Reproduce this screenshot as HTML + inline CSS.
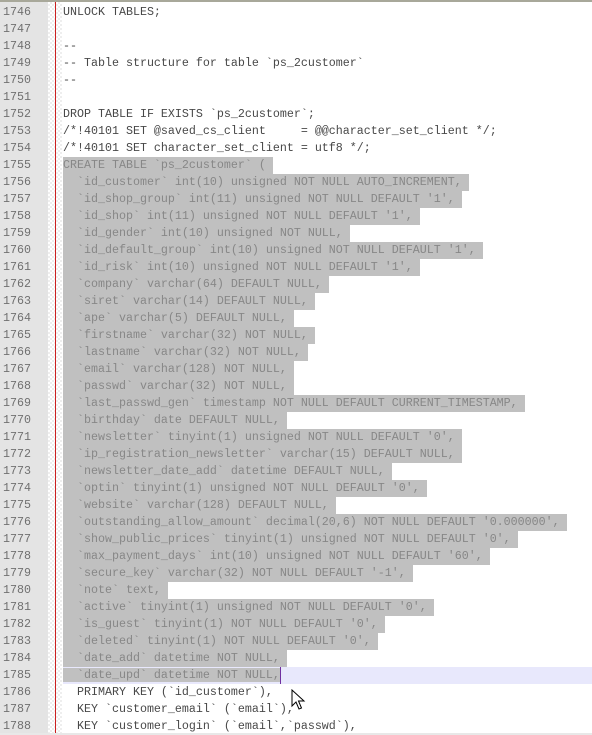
<!DOCTYPE html>
<html><head><meta charset="utf-8"><style>
html,body{margin:0;padding:0;}
body{width:592px;height:735px;overflow:hidden;background:#fff;position:relative;font-family:"Liberation Mono",monospace;font-size:11.67px;}
.top{position:absolute;left:0;top:0;width:592px;height:2px;background:#a8a89a;}
.gut{position:absolute;left:0;top:2px;width:48px;height:733px;background:#e4e4e4;}
.chk{position:absolute;left:48px;top:2px;width:14px;height:733px;background-image:linear-gradient(45deg,#eee 25%,transparent 25%,transparent 75%,#eee 75%),linear-gradient(45deg,#eee 25%,#fff 25%,#fff 75%,#eee 75%);background-size:4px 4px;background-position:0 0,2px 2px;}
.red{position:absolute;left:55px;top:2px;width:1px;height:733px;background:#cc2020;}
.lines{position:absolute;left:0;top:4px;}
.l{height:17px;line-height:17px;white-space:pre;position:relative;}
.n{position:absolute;left:3px;width:40px;color:#707070;}
.t{position:absolute;left:63px;color:#484848;}
.s{background:#c0c0c0;color:#878787;}
.cur{position:absolute;left:63px;width:529px;height:17px;background:#e8e8fc;}
.caret{display:inline-block;width:1px;height:17px;background:#7030a0;vertical-align:top;}
.bot{position:absolute;left:0;top:733px;width:592px;height:2px;background:#e8e8e8;}
</style></head><body>
<div class="top"></div><div class="gut"></div><div class="chk"></div><div class="red"></div>
<div class="lines">
<div class="l"><span class="n">1746</span><span class="t">UNLOCK TABLES;</span></div>
<div class="l"><span class="n">1747</span><span class="t"></span></div>
<div class="l"><span class="n">1748</span><span class="t">--</span></div>
<div class="l"><span class="n">1749</span><span class="t">-- Table structure for table `ps_2customer`</span></div>
<div class="l"><span class="n">1750</span><span class="t">--</span></div>
<div class="l"><span class="n">1751</span><span class="t"></span></div>
<div class="l"><span class="n">1752</span><span class="t">DROP TABLE IF EXISTS `ps_2customer`;</span></div>
<div class="l"><span class="n">1753</span><span class="t">/*!40101 SET @saved_cs_client     = @@character_set_client */;</span></div>
<div class="l"><span class="n">1754</span><span class="t">/*!40101 SET character_set_client = utf8 */;</span></div>
<div class="l"><span class="n">1755</span><span class="t s">CREATE TABLE `ps_2customer` ( </span></div>
<div class="l"><span class="n">1756</span><span class="t s">  `id_customer` int(10) unsigned NOT NULL AUTO_INCREMENT, </span></div>
<div class="l"><span class="n">1757</span><span class="t s">  `id_shop_group` int(11) unsigned NOT NULL DEFAULT '1', </span></div>
<div class="l"><span class="n">1758</span><span class="t s">  `id_shop` int(11) unsigned NOT NULL DEFAULT '1', </span></div>
<div class="l"><span class="n">1759</span><span class="t s">  `id_gender` int(10) unsigned NOT NULL, </span></div>
<div class="l"><span class="n">1760</span><span class="t s">  `id_default_group` int(10) unsigned NOT NULL DEFAULT '1', </span></div>
<div class="l"><span class="n">1761</span><span class="t s">  `id_risk` int(10) unsigned NOT NULL DEFAULT '1', </span></div>
<div class="l"><span class="n">1762</span><span class="t s">  `company` varchar(64) DEFAULT NULL, </span></div>
<div class="l"><span class="n">1763</span><span class="t s">  `siret` varchar(14) DEFAULT NULL, </span></div>
<div class="l"><span class="n">1764</span><span class="t s">  `ape` varchar(5) DEFAULT NULL, </span></div>
<div class="l"><span class="n">1765</span><span class="t s">  `firstname` varchar(32) NOT NULL, </span></div>
<div class="l"><span class="n">1766</span><span class="t s">  `lastname` varchar(32) NOT NULL, </span></div>
<div class="l"><span class="n">1767</span><span class="t s">  `email` varchar(128) NOT NULL, </span></div>
<div class="l"><span class="n">1768</span><span class="t s">  `passwd` varchar(32) NOT NULL, </span></div>
<div class="l"><span class="n">1769</span><span class="t s">  `last_passwd_gen` timestamp NOT NULL DEFAULT CURRENT_TIMESTAMP, </span></div>
<div class="l"><span class="n">1770</span><span class="t s">  `birthday` date DEFAULT NULL, </span></div>
<div class="l"><span class="n">1771</span><span class="t s">  `newsletter` tinyint(1) unsigned NOT NULL DEFAULT '0', </span></div>
<div class="l"><span class="n">1772</span><span class="t s">  `ip_registration_newsletter` varchar(15) DEFAULT NULL, </span></div>
<div class="l"><span class="n">1773</span><span class="t s">  `newsletter_date_add` datetime DEFAULT NULL, </span></div>
<div class="l"><span class="n">1774</span><span class="t s">  `optin` tinyint(1) unsigned NOT NULL DEFAULT '0', </span></div>
<div class="l"><span class="n">1775</span><span class="t s">  `website` varchar(128) DEFAULT NULL, </span></div>
<div class="l"><span class="n">1776</span><span class="t s">  `outstanding_allow_amount` decimal(20,6) NOT NULL DEFAULT '0.000000', </span></div>
<div class="l"><span class="n">1777</span><span class="t s">  `show_public_prices` tinyint(1) unsigned NOT NULL DEFAULT '0', </span></div>
<div class="l"><span class="n">1778</span><span class="t s">  `max_payment_days` int(10) unsigned NOT NULL DEFAULT '60', </span></div>
<div class="l"><span class="n">1779</span><span class="t s">  `secure_key` varchar(32) NOT NULL DEFAULT '-1', </span></div>
<div class="l"><span class="n">1780</span><span class="t s">  `note` text, </span></div>
<div class="l"><span class="n">1781</span><span class="t s">  `active` tinyint(1) unsigned NOT NULL DEFAULT '0', </span></div>
<div class="l"><span class="n">1782</span><span class="t s">  `is_guest` tinyint(1) NOT NULL DEFAULT '0', </span></div>
<div class="l"><span class="n">1783</span><span class="t s">  `deleted` tinyint(1) NOT NULL DEFAULT '0', </span></div>
<div class="l"><span class="n">1784</span><span class="t s">  `date_add` datetime NOT NULL, </span></div>
<div class="l"><div class="cur"></div><span class="n">1785</span><span class="t"><span class="s">  `date_upd` datetime NOT NULL,</span><span class="caret"></span></span></div>
<div class="l"><span class="n">1786</span><span class="t">  PRIMARY KEY (`id_customer`),</span></div>
<div class="l"><span class="n">1787</span><span class="t">  KEY `customer_email` (`email`),</span></div>
<div class="l"><span class="n">1788</span><span class="t">  KEY `customer_login` (`email`,`passwd`),</span></div>
</div>
<svg style="position:absolute;left:291px;top:689px" width="16" height="22" viewBox="0 0 16 22"><path d="M1 1 L1 17 L5 13 L8 20 L10.5 19 L7.5 12 L13 12 Z" fill="#fff" stroke="#000" stroke-width="1"/></svg>
<div class="bot"></div>
</body></html>
